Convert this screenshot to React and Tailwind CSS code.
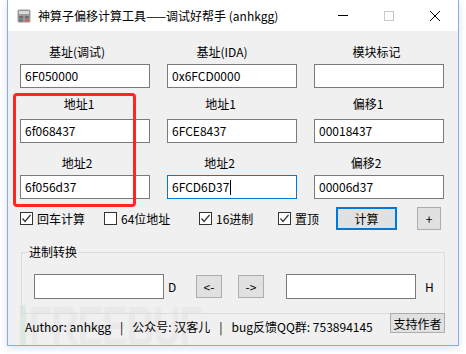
import React from 'react';

const cols = [
    [
        { label: '基址(调试)', lw: 'w-[114px]', value: '6F050000' },
        { label: '基址(IDA)', lw: 'w-[110px]', value: '0x6FCD0000' },
        { label: '模块标记', lw: 'w-[125px]', value: '' },
    ],
    [
        { label: '地址1', lw: 'w-[118px]', value: '6f068437' },
        { label: '地址1', lw: 'w-[107px]', value: '6FCE8437' },
        { label: '偏移1', lw: 'w-[108px]', value: '00018437' },
    ],
    [
        { label: '地址2', lw: 'w-[114px]', value: '6f056d37' },
        { label: '地址2', lw: 'w-[105px]', value: '6FCD6D37', focused: true },
        { label: '偏移2', lw: 'w-[104px]', value: '00006d37' },
    ],
];

const rowGaps = [
    { label: 'mt-0', input: 'mt-[4px]' },
    { label: 'mt-[8px]', input: 'mt-[7px]' },
    { label: 'mt-[12px]', input: 'mt-[4px]' },
];

function TextBox({ value, focused, className = '' }) {
    return (
        <div
            className={`h-[24px] bg-white border flex items-center pl-[4px] leading-[16px] ${
                focused ? 'border-[#0078d7]' : 'border-[#7a7a7a]'
            } ${className}`}
        >
            <span>{value}</span>
            {focused && <span className="w-[1px] h-[15px] bg-black ml-[1px]" />}
        </div>
    );
}

function Check({ checked, label, w }) {
    return (
        <div className={`flex items-center ${w}`}>
            <span className="w-[13px] h-[13px] border border-[#333] bg-white flex items-center justify-center">
                {checked && (
                    <svg width="11" height="11" viewBox="0 0 11 11">
                        <polyline points="1.5,5.5 4,8.5 9.5,2" fill="none" stroke="#333" strokeWidth="1.2" />
                    </svg>
                )}
            </span>
            <span className="ml-[4px] leading-[16px]">{label}</span>
        </div>
    );
}

function CalcIcon() {
    return (
        <svg width="14" height="14" viewBox="0 0 14 14">
            <rect x="0.5" y="0.5" width="13" height="13" rx="1.5" fill="#9a9a9a" />
            <rect x="2" y="2" width="10" height="3" fill="#d9d9d9" />
            <rect x="2" y="7" width="4" height="2.5" fill="#6e6e6e" />
            <rect x="8" y="7" width="4" height="2.5" fill="#6e6e6e" />
            <rect x="2" y="10.5" width="4" height="2" fill="#6e6e6e" />
            <rect x="8" y="10.5" width="4" height="2" fill="#e0584a" />
        </svg>
    );
}

export default function App() {
    return (
        <div className="w-[466px] h-[354px] bg-white relative overflow-hidden text-[12px] text-black font-['Noto_Sans_CJK_SC','Noto_Sans',sans-serif]">
            <div className="ml-[7px] w-[452px] h-[346px] border-x border-b border-[#7fb0e6] bg-[#f0f0f0] flex flex-col relative overflow-hidden shadow-[0_2px_8px_rgba(0,0,0,0.12)]">
                {/* title bar */}
                <div className="h-[31px] bg-white flex items-center shrink-0">
                    <div className="pl-[9px]">
                        <CalcIcon />
                    </div>
                    <span className="ml-[7px] leading-[16px] flex-1">神算子偏移计算工具——调试好帮手 (anhkgg)</span>
                    <div className="flex h-full">
                        <div className="w-[46px] flex items-center justify-center">
                            <span className="w-[10px] h-[1px] bg-black" />
                        </div>
                        <div className="w-[46px] flex items-center justify-center">
                            <span className="w-[10px] h-[10px] border border-[#c8c8c8]" />
                        </div>
                        <div className="w-[46px] flex items-center justify-center">
                            <svg width="10" height="10" viewBox="0 0 10 10">
                                <path d="M0 0L10 10M10 0L0 10" stroke="#000" strokeWidth="1" />
                            </svg>
                        </div>
                    </div>
                </div>

                {/* watermark */}
                <div className="absolute left-[12px] top-[298px] flex items-start pointer-events-none select-none">
                    <span className="w-[6px] h-[50px] bg-[#dde9e0] mt-[7px]" />
                    <span className="ml-[3px] text-[56px] leading-none font-bold text-[#e9e9e9] font-['Liberation_Sans',sans-serif] origin-left scale-x-[0.68] tracking-tight">
                        FREEBUF
                    </span>
                </div>

                {/* content */}
                <div className="pl-[12px] pt-[13px] relative flex flex-col">
                    {cols.map((row, ri) => (
                        <div key={ri} className="grid grid-cols-[130px_130px_130px] gap-x-[17px]">
                            {row.map((c, ci) => (
                                <div key={ci} className="flex flex-col">
                                    <div className={`${c.lw} text-center h-[16px] leading-[16px] ${rowGaps[ri].label}`}>
                                        {c.label}
                                    </div>
                                    <TextBox
                                        value={c.value}
                                        focused={c.focused}
                                        className={rowGaps[ri].input}
                                    />
                                </div>
                            ))}
                        </div>
                    ))}

                    {/* options row */}
                    <div className="mt-[8px] h-[23px] flex items-center">
                        <Check checked label="回车计算" w="w-[84px]" />
                        <Check label="64位地址" w="w-[95px]" />
                        <Check checked label="16进制" w="w-[79px]" />
                        <Check checked label="置顶" w="w-[58px]" />
                        <button className="w-[61px] h-[23px] border-2 border-[#0078d7] bg-[#e1e1e1] leading-[16px]">
                            计算
                        </button>
                        <button className="ml-[20px] w-[24px] h-[23px] border border-[#adadad] bg-[#e1e1e1] leading-[16px]">
                            +
                        </button>
                    </div>

                    {/* group box */}
                    <div className="mt-[22px] ml-[1px] w-[424px] h-[62px] border border-[#dcdcdc] relative">
                        <span className="absolute left-[6px] -top-[9px] px-[1px] bg-[#f0f0f0] leading-[16px]">进制转换</span>
                        <div className="pt-[21px] pl-[12px] flex items-start">
                            <div className="w-[130px] h-[25px] bg-white border border-[#7a7a7a]" />
                            <span className="ml-[4px] w-[9px] leading-[25px]">D</span>
                            <button className="ml-[19px] mt-[1px] w-[26px] h-[23px] border border-[#adadad] bg-[#e1e1e1] leading-[16px]">
                                &lt;-
                            </button>
                            <button className="ml-[16px] mt-[1px] w-[26px] h-[23px] border border-[#adadad] bg-[#e1e1e1] leading-[16px]">
                                -&gt;
                            </button>
                            <div className="ml-[22px] w-[130px] h-[25px] bg-white border border-[#7a7a7a]" />
                            <span className="ml-[9px] leading-[25px]">H</span>
                        </div>
                    </div>

                    {/* status row */}
                    <div className="-mt-[1px] pr-[13px] h-[20px] flex items-start relative">
                        <div className="pl-[5px] mt-[6px] leading-[16px] flex">
                            <span>Author: anhkgg</span>
                            <span className="mx-[9px]">|</span>
                            <span>公众号: 汉客儿</span>
                            <span className="mx-[9px]">|</span>
                            <span>bug反馈QQ群: 753894145</span>
                        </div>
                        <button className="ml-auto w-[55px] h-[20px] border border-[#adadad] bg-[#e1e1e1] leading-[16px] pt-[2px] whitespace-nowrap">
                            支持作者
                        </button>
                    </div>
                </div>
            </div>

            {/* annotation box */}
            <div className="absolute left-[13px] top-[93px] w-[123px] h-[114px] border-[3px] border-[#ff2626] rounded-[4px] pointer-events-none" />
        </div>
    );
}
